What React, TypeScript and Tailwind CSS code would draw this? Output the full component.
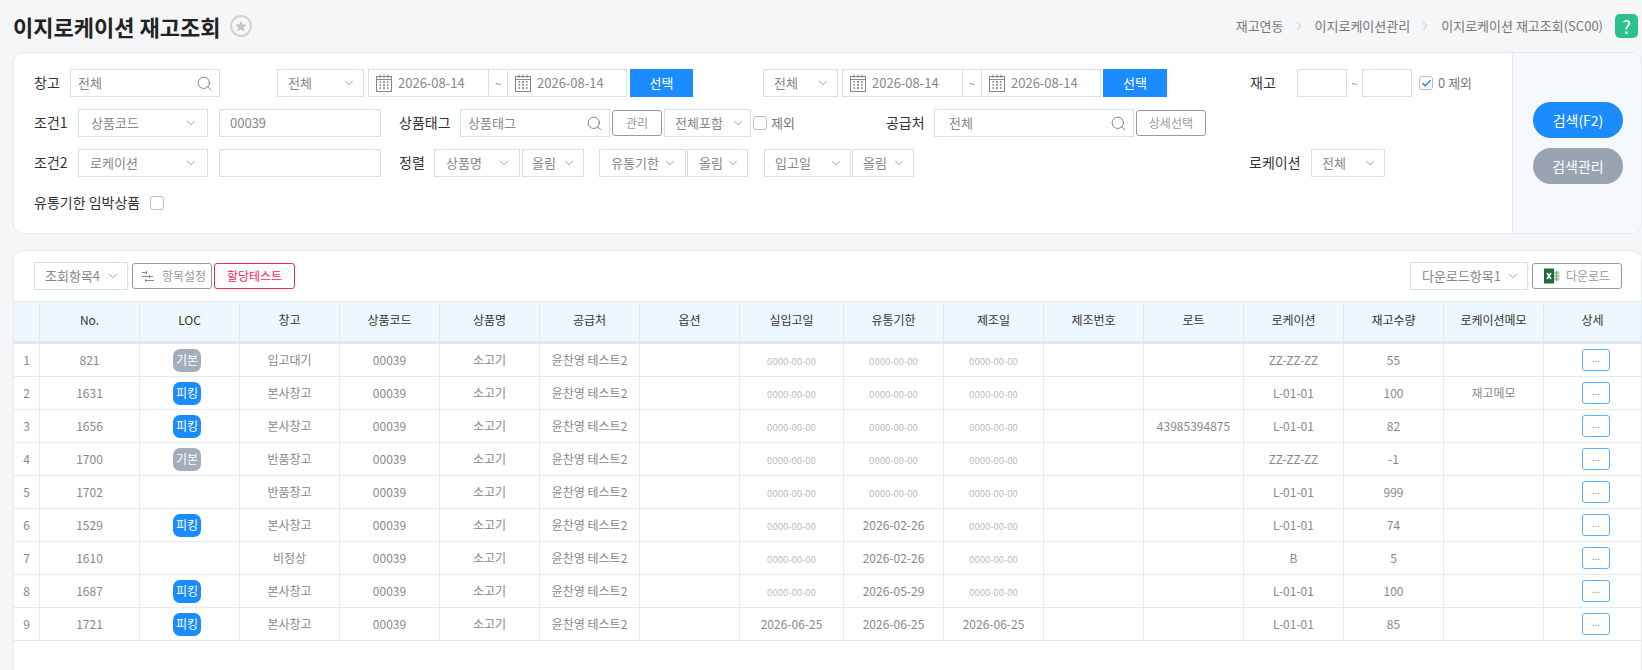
import { ChevronDown, ChevronRight, Search, Check } from "lucide-react";

const Arrow = () => <ChevronDown size={14} strokeWidth={1.2} className="shrink-0 text-[#777]" />;

const Select = ({ label, className }: { label: string; className: string }) => (
  <div className={`flex h-[28px] items-center justify-between border border-[#d5e0ec] bg-white text-[13px] text-[#888] ${className}`}>
    <span className="whitespace-nowrap">{label}</span>
    <Arrow />
  </div>
);

const SearchBox = ({ label, className }: { label: string; className: string }) => (
  <div className={`flex h-[28px] items-center justify-between border border-[#d5e0ec] bg-white pl-[7px] pr-[6px] text-[13px] text-[#888] ${className}`}>
    <span>{label}</span>
    <Search size={17} strokeWidth={1} className="text-[#555]" />
  </div>
);

const TextBox = ({ value, className }: { value?: string; className: string }) => (
  <div className={`flex h-[28px] items-center border border-[#d5e0ec] bg-white pl-[10px] text-[13px] text-[#888] ${className}`}>{value}</div>
);

const Calendar = () => (
  <svg width="16" height="18" viewBox="0 0 16 18" fill="none" className="shrink-0">
    <rect x="0.5" y="2.5" width="15" height="15" stroke="#888" />
    <path d="M0.5 5.5H15.5M4 0.5V4M8 0.5V4M12 0.5V4" stroke="#888" />
    <path d="M3.5 8H5M7 8H9M11 8H12.5M3.5 11H5M7 11H9M11 11H12.5M3.5 14H5M7 14H9M11 14H12.5" stroke="#777" strokeWidth="1.4" />
  </svg>
);

const DateBox = ({ className }: { className: string }) => (
  <div className={`flex h-[28px] items-center gap-[6px] pl-[7px] text-[13px] text-[#888] ${className}`}>
    <Calendar />
    <span>2026-08-14</span>
  </div>
);

const DateRange = () => (
  <div className="ml-[4px] flex h-[28px] w-[259px] items-center border border-[#d5e0ec] bg-white">
    <DateBox className="w-[119px]" />
    <div className="flex h-full w-[20px] items-center justify-center border-x border-[#d5e0ec] text-[11px] text-[#888]">~</div>
    <DateBox className="flex-1" />
  </div>
);

const BlueBtn = ({ className }: { className: string }) => (
  <button className={`h-[28px] bg-[#1a8cff] text-[13px] text-white ${className}`}>선택</button>
);

const GrayBtn = ({ label, className }: { label: string; className: string }) => (
  <button className={`h-[26px] rounded-[3px] border border-[#999] bg-white text-[12px] text-[#999] ${className}`}>{label}</button>
);

const Box = ({ checked, className }: { checked?: boolean; className?: string }) => (
  <span className={`flex h-[14px] w-[14px] shrink-0 items-center justify-center rounded-[3px] border border-[#bbb] bg-white ${className ?? ""}`}>
    {checked && <Check size={11} strokeWidth={3.5} className="text-[#1a8cff]" />}
  </span>
);

const Label = ({ text, className }: { text: string; className: string }) => (
  <span className={`shrink-0 whitespace-nowrap pb-[2px] text-[14px] text-[#333] ${className}`}>{text}</span>
);

const ExcelIcon = () => (
  <svg width="16" height="16" viewBox="0 0 16 16" className="shrink-0">
    <rect x="9" y="3" width="7" height="10" fill="#dfe8df" />
    <path d="M10 5H15M10 8H15M10 11H15M12.5 3V13" stroke="#7aa884" strokeWidth="1" />
    <rect x="0" y="0.5" width="10" height="15" fill="#1d6f38" />
    <path d="M3 5L7 11M7 5L3 11" stroke="#fff" strokeWidth="1.5" />
  </svg>
);

const SlidersIcon = () => (
  <svg width="12" height="13" viewBox="0 0 12 13" fill="none" className="shrink-0" stroke="#888">
    <path d="M0 2.5H4M0 6.5H11M4 10.5H12" />
    <path d="M4.5 1V4M7.5 5V8M3.5 9V12" />
  </svg>
);

const columns = ["No.", "LOC", "창고", "상품코드", "상품명", "공급처", "옵션", "실입고일", "유통기한", "제조일", "제조번호", "로트", "로케이션", "재고수량", "로케이션메모", "상세"];
const zero = "0000-00-00";

type Row = {
  no: string; loc?: "기본" | "피킹"; wh: string; in: string; exp: string; mfg: string; lot?: string; place: string; qty: string; memo?: string;
};

const rows: Row[] = [
  { no: "821", loc: "기본", wh: "입고대기", in: zero, exp: zero, mfg: zero, place: "ZZ-ZZ-ZZ", qty: "55" },
  { no: "1631", loc: "피킹", wh: "본사창고", in: zero, exp: zero, mfg: zero, place: "L-01-01", qty: "100", memo: "재고메모" },
  { no: "1656", loc: "피킹", wh: "본사창고", in: zero, exp: zero, mfg: zero, lot: "43985394875", place: "L-01-01", qty: "82" },
  { no: "1700", loc: "기본", wh: "반품창고", in: zero, exp: zero, mfg: zero, place: "ZZ-ZZ-ZZ", qty: "-1" },
  { no: "1702", wh: "반품창고", in: zero, exp: zero, mfg: zero, place: "L-01-01", qty: "999" },
  { no: "1529", loc: "피킹", wh: "본사창고", in: zero, exp: "2026-02-26", mfg: zero, place: "L-01-01", qty: "74" },
  { no: "1610", wh: "비정상", in: zero, exp: "2026-02-26", mfg: zero, place: "B", qty: "5" },
  { no: "1687", loc: "피킹", wh: "본사창고", in: zero, exp: "2026-05-29", mfg: zero, place: "L-01-01", qty: "100" },
  { no: "1721", loc: "피킹", wh: "본사창고", in: "2026-06-25", exp: "2026-06-25", mfg: "2026-06-25", place: "L-01-01", qty: "85" },
];

const td = "h-[33px] border-r border-b border-[#e3eaf3] p-0 text-center align-middle";

const DateCell = ({ v }: { v: string }) => (
  <td className={td}>
    {v === zero ? <span className="text-[9.5px] text-[#bbb]">{v}</span> : v}
  </td>
);

export default function App() {
  return (
    <div className="h-[670px] w-[1642px] overflow-hidden bg-[#f4f6f8] pl-[13px] font-['Noto_Sans_CJK_KR','Noto_Sans',sans-serif]">
      {/* Title */}
      <div className="flex h-[52px] items-center">
        <h1 className="text-[22px] leading-none font-bold text-[#222]">이지로케이션 재고조회</h1>
        <span className="ml-[10px] flex h-[22px] w-[22px] items-center justify-center rounded-full border-2 border-[#d2d2d2]">
          <svg width="12" height="12" viewBox="0 0 24 24" fill="#c4c4c4">
            <path d="M12 1l3.4 7.3 7.9 1-5.8 5.5 1.5 7.9L12 18.8l-7 3.9 1.5-7.9L.7 9.3l7.9-1z" />
          </svg>
        </span>
        <div className="ml-auto flex items-center pr-[4px] text-[13px] text-[#777]">
          <span>재고연동</span>
          <ChevronRight size={14} strokeWidth={1} className="mr-[9px] ml-[8px] text-[#999]" />
          <span>이지로케이션관리</span>
          <ChevronRight size={14} strokeWidth={1} className="mr-[9px] ml-[8px] text-[#999]" />
          <span>이지로케이션 재고조회(SC00)</span>
          <span className="ml-[12px] flex h-[24px] w-[23px] items-center justify-center rounded-[5px] bg-[#2bc08e] text-[18px] text-white">?</span>
        </div>
      </div>

      {/* Search panel */}
      <div className="flex h-[182px] overflow-hidden rounded-[10px] border border-[#e6eaef] bg-white">
        <div className="flex flex-1 flex-col gap-[12px] pt-[16px] pl-[20px]">
          <div className="flex h-[28px] items-center">
            <Label text="창고" className="w-[36px]" />
            <SearchBox label="전체" className="w-[150px]" />
            <Select label="전체" className="ml-[57px] w-[87px] pr-[7px] pl-[10px]" />
            <DateRange />
            <BlueBtn className="ml-[3px] w-[63px]" />
            <Select label="전체" className="ml-[70px] w-[75px] pr-[7px] pl-[10px]" />
            <DateRange />
            <BlueBtn className="ml-[2px] w-[64px]" />
            <Label text="재고" className="ml-[83px] w-[47px]" />
            <TextBox className="w-[50px]" />
            <span className="w-[15px] text-center text-[11px] text-[#888]">~</span>
            <TextBox className="w-[50px]" />
            <Box checked className="ml-[7px]" />
            <span className="ml-[5px] whitespace-nowrap text-[13px] text-[#777]">0 제외</span>
          </div>

          <div className="flex h-[28px] items-center">
            <Label text="조건1" className="w-[44px]" />
            <Select label="상품코드" className="w-[130px] pr-[9px] pl-[12px]" />
            <TextBox value="00039" className="ml-[11px] w-[162px]" />
            <Label text="상품태그" className="ml-[18px] w-[61px]" />
            <SearchBox label="상품태그" className="w-[150px]" />
            <GrayBtn label="관리" className="ml-[2px] w-[50px]" />
            <Select label="전체포함" className="ml-[2px] w-[87px] pr-[5px] pl-[10px]" />
            <Box className="ml-[2px]" />
            <span className="ml-[4px] text-[13px] text-[#777]">제외</span>
            <Label text="공급처" className="ml-[91px] w-[48px]" />
            <div className="flex h-[28px] w-[200px] items-center justify-between border border-[#d5e0ec] pr-[6px] pl-[14px] text-[13px] text-[#888]">
              <span>전체</span>
              <Search size={17} strokeWidth={1} className="text-[#555]" />
            </div>
            <GrayBtn label="상세선택" className="ml-[2px] w-[70px]" />
          </div>

          <div className="flex h-[28px] items-center">
            <Label text="조건2" className="w-[44px]" />
            <Select label="로케이션" className="w-[130px] pr-[9px] pl-[11px]" />
            <TextBox className="ml-[11px] w-[162px]" />
            <Label text="정렬" className="ml-[18px] w-[35px]" />
            <Select label="상품명" className="w-[86px] pr-[8px] pl-[11px]" />
            <Select label="올림" className="ml-[2px] w-[62px] pr-[7px] pl-[9px]" />
            <Select label="유통기한" className="ml-[15px] w-[87px] pr-[8px] pl-[11px]" />
            <Select label="올림" className="ml-[1px] w-[61px] pr-[7px] pl-[11px]" />
            <Select label="입고일" className="ml-[16px] w-[87px] pr-[7px] pl-[10px]" />
            <Select label="올림" className="ml-[1px] w-[62px] pr-[7px] pl-[10px]" />
            <Label text="로케이션" className="ml-[335px] w-[62px]" />
            <Select label="전체" className="w-[74px] pr-[7px] pl-[10px]" />
          </div>

          <div className="flex h-[28px] items-center">
            <Label text="유통기한 임박상품" className="" />
            <Box className="ml-[10px]" />
          </div>
        </div>

        <div className="flex w-[129px] shrink-0 flex-col gap-[10px] border-l border-[#e6eaef] bg-[#f5f9fd] pt-[49px] pl-[20px]">
          <button className="h-[36px] w-[90px] rounded-full bg-[#1a8cff] text-[14px] text-white">검색(F2)</button>
          <button className="h-[36px] w-[90px] rounded-full bg-[#9aa3b1] text-[14px] text-white">검색관리</button>
        </div>
      </div>

      {/* Result list */}
      <div className="mt-[16px] h-[421px] overflow-hidden rounded-t-[10px] border border-b-0 border-[#e6eaef] bg-white">
        <div className="flex h-[50px] items-center pr-[19px] pl-[20px]">
          <Select label="조회항목4" className="w-[94px] pr-[7px] pl-[10px]" />
          <button className="ml-[4px] flex h-[26px] w-[80px] items-center gap-[8px] rounded-[3px] border border-[#999] pl-[9px] text-[12px] text-[#999]">
            <SlidersIcon />
            항목설정
          </button>
          <button className="ml-[2px] h-[26px] w-[81px] rounded-[3px] border border-[#f0285a] text-[12px] text-[#f0285a]">할당테스트</button>
          <Select label="다운로드항목1" className="ml-auto w-[118px] pr-[7px] pl-[11px]" />
          <button className="ml-[4px] flex h-[26px] w-[90px] items-center gap-[6px] rounded-[3px] border border-[#999] pl-[11px] text-[12px] text-[#999]">
            <ExcelIcon />
            다운로드
          </button>
        </div>

        <table className="w-[1628px] table-fixed border-separate border-spacing-0 text-[12px] text-[#888]">
          <colgroup>
            <col className="w-[26px]" />
            {columns.map((c) => (
              <col key={c} className={c === "실입고일" ? "w-[104px]" : c === "상세" ? "w-[98px]" : "w-[100px]"} />
            ))}
          </colgroup>
          <thead>
            <tr>
              <th className="h-[43px] border-t border-r border-b-[3px] border-[#dfe7f1] bg-[#eef6fe] p-0" />
              {columns.map((c) => (
                <th key={c} className="h-[43px] border-t border-r border-b-[3px] border-[#dfe7f1] bg-[#eef6fe] p-0 pb-[3px] text-center text-[12px] font-normal text-[#333]">
                  {c}
                </th>
              ))}
            </tr>
          </thead>
          <tbody>
            {rows.map((r, i) => (
              <tr key={r.no}>
                <td className={td}>{i + 1}</td>
                <td className={td}>{r.no}</td>
                <td className={td}>
                  {r.loc && (
                    <span className={`ml-[33px] flex h-[23px] w-[28px] items-center justify-center rounded-[7px] text-[12px] text-white ${r.loc === "피킹" ? "bg-[#1a8cff]" : "bg-[#a3adbb]"}`}>
                      {r.loc}
                    </span>
                  )}
                </td>
                <td className={td}>{r.wh}</td>
                <td className={td}>00039</td>
                <td className={td}>소고기</td>
                <td className={td}>윤찬영 테스트2</td>
                <td className={td} />
                <DateCell v={r.in} />
                <DateCell v={r.exp} />
                <DateCell v={r.mfg} />
                <td className={td} />
                <td className={td}>{r.lot}</td>
                <td className={td}>{r.place}</td>
                <td className={td}>{r.qty}</td>
                <td className={td}>{r.memo}</td>
                <td className={td}>
                  <button className="ml-[38px] block h-[22px] w-[28px] rounded-[3px] border border-[#5ab0ff] pb-[4px] text-[10px] leading-none text-[#888]">...</button>
                </td>
              </tr>
            ))}
          </tbody>
        </table>
      </div>
    </div>
  );
}
